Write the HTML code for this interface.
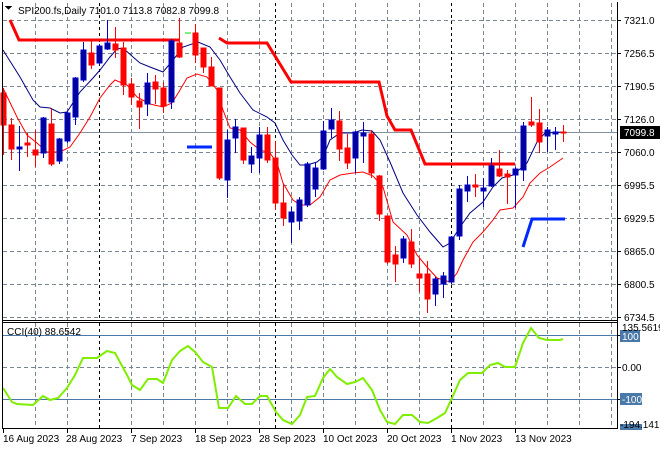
<!DOCTYPE html>
<html><head><meta charset="utf-8"><style>
html,body{margin:0;padding:0;background:#fff;width:660px;height:450px;overflow:hidden}
svg{display:block}
text{font-family:"Liberation Sans",sans-serif;font-size:10px;fill:#000}
</style></head><body>
<svg width="660" height="450" viewBox="0 0 660 450" xmlns="http://www.w3.org/2000/svg" shape-rendering="crispEdges">
<rect width="660" height="450" fill="#fff"/>
<!-- grid main -->
<g stroke="#7a8593" stroke-width="1" stroke-dasharray="4,3">
<path d="M3 20.5H617M3 53.5H617M3 86.5H617M3 119.5H617M3 152.5H617M3 185.5H617M3 218.5H617M3 251.5H617M3 284.5H617M3 317.5H617"/>
<path d="M35.5 3V320M67.5 3V320M131.5 3V320M163.5 3V320M195.5 3V320M227.5 3V320M259.5 3V320M291.5 3V320M323.5 3V320M355.5 3V320M387.5 3V320M419.5 3V320M483.5 3V320M515.5 3V320M547.5 3V320M579.5 3V320M611.5 3V320"/>
<path d="M35.5 323V428M67.5 323V428M131.5 323V428M163.5 323V428M195.5 323V428M227.5 323V428M259.5 323V428M291.5 323V428M323.5 323V428M355.5 323V428M387.5 323V428M419.5 323V428M483.5 323V428M515.5 323V428M547.5 323V428M579.5 323V428M611.5 323V428M3 367.5H617"/>
</g>
<g stroke="#000" stroke-width="1" stroke-dasharray="3,3">
<path d="M99.5 3V320M275.5 3V320M451.5 3V320M99.5 323V428M275.5 323V428M451.5 323V428"/>
</g>
<!-- price line -->
<path d="M3 132.5H617" stroke="#8391a0" stroke-width="1"/>
<!-- resistance red -->
<g fill="none" stroke="#ff0000" stroke-width="3" shape-rendering="auto">
<path d="M10 20L19 40H180"/>
<path d="M219 38L227 43H267L291 82H379L387 116L395 130H411L425 164H515"/>
</g>
<g fill="none" stroke="#0028ff" stroke-width="3" shape-rendering="auto">
<path d="M187 147H212"/>
<path d="M523 247L532 219H565"/>
</g>
<path d="M185 33H191" stroke="#00e000" stroke-width="1"/>
<!-- MAs -->
<polyline fill="none" stroke="#000080" stroke-width="1" shape-rendering="auto" points="3,50 20,77 33,100 40,107 50,108 60,113 67,112 80,92 93,78 100,70 110,57 117,49 123,48 133,57 140,63 150,67 163,72 173,60 183,47 198,42 210,47 220,60 230,77 240,93 253,110 267,117 275,123 283,140 292,155 300,165 307,165 317,162 323,157 330,140 340,133 353,133 362,130 372,131 380,140 390,162 403,193 417,215 430,232 443,247 450,243 460,227 470,213 483,202 493,187 502,178 513,175 527,163 537,142 545,133 563,132"/>
<polyline fill="none" stroke="#ff0000" stroke-width="1" shape-rendering="auto" points="3,88 17,117 27,135 37,143 47,152 60,152 70,147 80,133 90,117 100,98 110,85 115,80 127,85 137,97 150,104 163,107 172,103 180,90 187,78 197,74 207,77 217,90 223,110 230,128 240,130 250,142 260,150 270,153 277,163 283,183 293,200 300,205 310,205 320,197 330,180 340,175 353,173 363,172 373,176 383,187 393,222 407,235 417,255 427,267 437,278 450,282 457,273 463,260 473,242 483,232 493,220 500,210 513,208 523,197 530,183 540,173 550,167 563,158"/>
<!-- candles -->
<g id="c">
<g stroke="#ff0000" fill="#ff0000">
<path d="M3.5 88V155M11.5 118V160M27.5 133V157M35.5 130V167M51.5 108V166M91.5 40V69M115.5 27V58M123.5 42V95M131.5 78V105M139.5 93V129M155.5 75V104M163.5 82V113M179.5 18V58M195.5 24V63M203.5 48V73M211.5 57V86M219.5 88V180M243.5 128V164M267.5 127V163M275.5 141V210M283.5 184V226M339.5 111V161M347.5 134V169M371.5 130V178M379.5 175V221M387.5 216V264M395.5 246V282M411.5 229V268M419.5 258V292M427.5 261V313M475.5 174V197M499.5 150V177M507.5 170V204M531.5 97V127M539.5 109V153M563.5 125V142" fill="none"/>
<rect x="1" y="93" width="5" height="32"/><rect x="9" y="125" width="5" height="24"/><rect x="25" y="143" width="5" height="2"/><rect x="33" y="150" width="5" height="5"/><rect x="49" y="124" width="5" height="40"/><rect x="89" y="53" width="5" height="12"/><rect x="113" y="44" width="5" height="6"/><rect x="121" y="48" width="5" height="37"/><rect x="129" y="84" width="5" height="13"/><rect x="137" y="101" width="5" height="6"/><rect x="153" y="82" width="5" height="7"/><rect x="161" y="88" width="5" height="18"/><rect x="177" y="43" width="5" height="14"/><rect x="193" y="33" width="5" height="22"/><rect x="201" y="48" width="5" height="19"/><rect x="209" y="67" width="5" height="19"/><rect x="217" y="88" width="5" height="90"/><rect x="241" y="128" width="5" height="32"/><rect x="265" y="135" width="5" height="25"/><rect x="273" y="158" width="5" height="45"/><rect x="281" y="203" width="5" height="15"/><rect x="337" y="121" width="5" height="28"/><rect x="345" y="148" width="5" height="15"/><rect x="369" y="134" width="5" height="39"/><rect x="377" y="176" width="5" height="38"/><rect x="385" y="216" width="5" height="46"/><rect x="393" y="255" width="5" height="9"/><rect x="409" y="242" width="5" height="22"/><rect x="417" y="274" width="5" height="4"/><rect x="425" y="274" width="5" height="25"/><rect x="473" y="185" width="5" height="2"/><rect x="497" y="169" width="5" height="7"/><rect x="505" y="174" width="5" height="3"/><rect x="529" y="122" width="5" height="3"/><rect x="537" y="123" width="5" height="19"/><rect x="561" y="132" width="5" height="1"/>
</g>
<g stroke="#0000c8" fill="#00009c">
<path d="M19.5 126V171M43.5 117V158M59.5 138V164M67.5 112V143M75.5 77V125M83.5 42V82M99.5 44V65M107.5 20V50M147.5 73V116M171.5 39V109M227.5 130V198M235.5 119V153M251.5 147V173M259.5 127V173M291.5 207V243M299.5 197V230M307.5 162V207M315.5 162V197M323.5 121V170M331.5 108V138M355.5 131V173M363.5 122V163M403.5 236V263M435.5 277V306M443.5 272V298M451.5 236V284M459.5 185V240M467.5 176V202M483.5 178V207M491.5 158V187M515.5 167V208M523.5 122V181M547.5 127V152M555.5 127V150" fill="none"/>
<rect x="17" y="147" width="5" height="2"/><rect x="41" y="118" width="5" height="35"/><rect x="57" y="139" width="5" height="22"/><rect x="65" y="113" width="5" height="28"/><rect x="73" y="78" width="5" height="39"/><rect x="81" y="50" width="5" height="30"/><rect x="97" y="46" width="5" height="17"/><rect x="105" y="43" width="5" height="6"/><rect x="145" y="83" width="5" height="21"/><rect x="169" y="41" width="5" height="61"/><rect x="225" y="140" width="5" height="40"/><rect x="233" y="127" width="5" height="11"/><rect x="249" y="156" width="5" height="8"/><rect x="257" y="135" width="5" height="23"/><rect x="289" y="212" width="5" height="10"/><rect x="297" y="200" width="5" height="21"/><rect x="305" y="164" width="5" height="41"/><rect x="313" y="168" width="5" height="21"/><rect x="321" y="131" width="5" height="38"/><rect x="329" y="120" width="5" height="9"/><rect x="353" y="132" width="5" height="26"/><rect x="361" y="133" width="5" height="3"/><rect x="401" y="239" width="5" height="19"/><rect x="433" y="279" width="5" height="15"/><rect x="441" y="276" width="5" height="8"/><rect x="449" y="237" width="5" height="45"/><rect x="457" y="189" width="5" height="47"/><rect x="465" y="185" width="5" height="6"/><rect x="481" y="188" width="5" height="3"/><rect x="489" y="166" width="5" height="20"/><rect x="513" y="169" width="5" height="6"/><rect x="521" y="126" width="5" height="44"/><rect x="545" y="130" width="5" height="6"/><rect x="553" y="132" width="5" height="2"/>
</g>
</g>
<!-- CCI levels -->
<path d="M3 335.5H617M3 399.5H617" stroke="#4a78a8" stroke-width="1"/>
<polyline fill="none" stroke="#7fee00" stroke-width="2" shape-rendering="auto" points="3,388 12,402 17,404 33,405 43,396 50,400 58,398 67,388 75,375 83,358 97,358 107,351 115,353 127,375 132,385 140,390 148,379 157,379 163,383 172,360 180,351 188,346 195,352 203,362 212,367 219,408 228,408 236,396 245,404 252,404 260,396 267,396 276,412 283,420 292,424 300,415 307,397 315,396 323,378 330,369 337,377 347,384 355,382 363,378 372,390 380,410 387,422 395,424 403,415 412,415 420,422 428,423 437,418 445,413 452,398 460,380 468,373 482,373 490,365 498,363 505,367 515,367 523,343 531,328 539,338 547,340 560,340 563,339"/>
<!-- frames -->
<g fill="none" stroke="#000" stroke-width="1">
<path d="M2.5 2V429M617.5 2V429M2 320.5H618M2 322.5H618M2 428.5H618"/>
</g>
<!-- right axis ticks -->
<path d="M617 20.5H621M617 53.5H621M617 86.5H621M617 119.5H621M617 152.5H621M617 185.5H621M617 218.5H621M617 251.5H621M617 284.5H621M617 317.5H621M617 335.5H621M617 367.5H621M617 399.5H621" stroke="#000"/>
<g>
<text x="624" y="24">7321.0</text><text x="624" y="57">7256.5</text><text x="624" y="90">7190.5</text><text x="624" y="123">7126.0</text><text x="624" y="156">7060.0</text><text x="624" y="189">6995.5</text><text x="624" y="222">6929.5</text><text x="624" y="255">6865.0</text><text x="624" y="288">6800.5</text><text x="624" y="321">6734.5</text>
</g>
<rect x="620" y="126" width="40" height="13" fill="#000"/>
<text x="624" y="136" style="fill:#fff">7099.8</text>
<rect x="620" y="330" width="20" height="12" fill="#4a78a8"/>
<text x="622" y="331">135.5619</text>
<text x="622" y="340" style="fill:#fff">100</text>
<text x="622" y="371">0.00</text>
<rect x="620" y="393" width="22" height="12" fill="#4a78a8"/>
<text x="622" y="403" style="fill:#fff">-100</text>
<rect x="620" y="424" width="22" height="6" fill="#4a78a8"/>
<text x="620" y="428">-194.141</text>
<!-- date axis -->
<path d="M3.5 429V433M67.5 429V433M131.5 429V433M195.5 429V433M259.5 429V433M323.5 429V433M387.5 429V433M451.5 429V433M515.5 429V433" stroke="#000"/>
<text x="3" y="442">16 Aug 2023</text><text x="66" y="442">28 Aug 2023</text><text x="131" y="442">7 Sep 2023</text><text x="195" y="442">18 Sep 2023</text><text x="259" y="442">28 Sep 2023</text><text x="323" y="442">10 Oct 2023</text><text x="387" y="442">20 Oct 2023</text><text x="451" y="442">1 Nov 2023</text><text x="515" y="442">13 Nov 2023</text>
<!-- titles -->
<path d="M5 6H12L8.5 10Z" fill="#000"/>
<text x="18" y="14">SPI200.fs,Daily  7101.0 7113.8 7082.8 7099.8</text>
<text x="7" y="335">CCI(40) 88.6542</text>
</svg>
</body></html>
